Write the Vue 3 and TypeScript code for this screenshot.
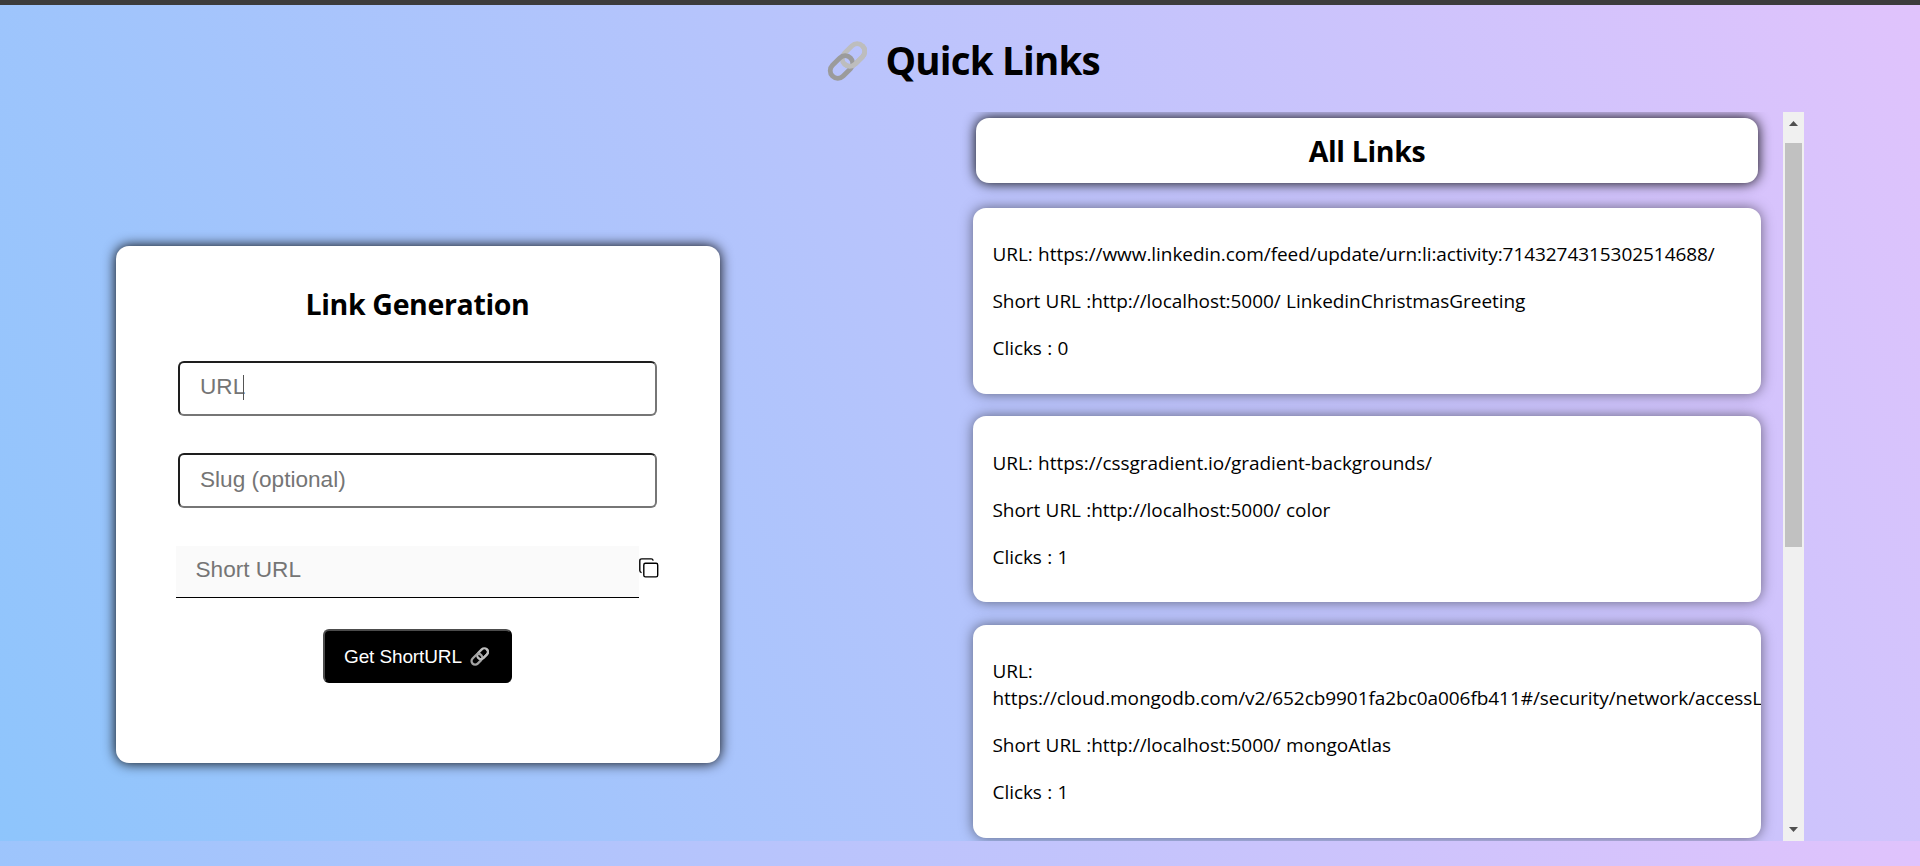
<script setup lang="ts">
import { ref } from 'vue'

interface LinkItem {
  url: string
  slug: string
  clicks: number
}

const url = ref('')
const slug = ref('')
const shortUrl = ref('')

const links: LinkItem[] = [
  { url: 'https://www.linkedin.com/feed/update/urn:li:activity:7143274315302514688/', slug: 'LinkedinChristmasGreeting', clicks: 0 },
  { url: 'https://cssgradient.io/gradient-backgrounds/', slug: 'color', clicks: 1 },
  { url: 'https://cloud.mongodb.com/v2/652cb9901fa2bc0a006fb411#/security/network/accessL', slug: 'mongoAtlas', clicks: 1 },
]
</script>

<template>
  <div class="page">
    <header class="heading">
      <svg class="chain" viewBox="0 0 40 40" fill="none" stroke-width="4.8">
        <clipPath id="lower-half"><path d="M0 40L40 0V40Z" /></clipPath>
        <rect x="13.7" y="6.4" width="25.6" height="15.2" rx="7.6" stroke="#bdbdbd" transform="rotate(-45 26.5 14)" />
        <rect x="1.7" y="18.4" width="25.6" height="15.2" rx="7.6" stroke="#9b9b9b" transform="rotate(-45 14.5 26)" />
        <g clip-path="url(#lower-half)">
          <rect x="13.7" y="6.4" width="25.6" height="15.2" rx="7.6" stroke="#bdbdbd" transform="rotate(-45 26.5 14)" />
        </g>
      </svg>
      <h1>Quick Links</h1>
    </header>

    <main class="columns">
      <section class="form-card">
        <h2>Link Generation</h2>
        <div class="field">
          <input v-model="url" type="text" placeholder="URL" />
          <span class="caret"></span>
        </div>
        <div class="field slug">
          <input v-model="slug" type="text" placeholder="Slug (optional)" />
        </div>
        <div class="short">
          <input v-model="shortUrl" type="text" placeholder="Short URL" readonly />
          <svg class="copy" viewBox="0 0 20 20" fill="none" stroke="#000" stroke-width="1.4">
            <path d="M2.6 14.6Q.8 14.2 .8 12.5V2.8Q.8.9 2.8.9H12.2Q13.8.9 14.2 2.6" />
            <rect x="4.8" y="5.3" width="13.9" height="13.6" rx="1.6" />
          </svg>
        </div>
        <button type="button">
          <span>Get ShortURL</span>
          <svg class="chain-small" viewBox="0 0 40 40" fill="none" stroke-width="4.8">
            <rect x="13.7" y="6.4" width="25.6" height="15.2" rx="7.6" stroke="#bdbdbd" transform="rotate(-45 26.5 14)" />
            <rect x="1.7" y="18.4" width="25.6" height="15.2" rx="7.6" stroke="#a3a3a3" transform="rotate(-45 14.5 26)" />
            <g clip-path="url(#lower-half)">
              <rect x="13.7" y="6.4" width="25.6" height="15.2" rx="7.6" stroke="#bdbdbd" transform="rotate(-45 26.5 14)" />
            </g>
          </svg>
        </button>
      </section>

      <section class="list">
        <div class="items">
          <div class="list-title"><h2>All Links</h2></div>
          <article v-for="link in links" :key="link.slug" class="item">
            <p>URL: {{ link.url }}</p>
            <p>Short URL :http://localhost:5000/ {{ link.slug }}</p>
            <p>Clicks : {{ link.clicks }}</p>
          </article>
        </div>
        <div class="scrollbar">
          <svg viewBox="0 0 21 31"><path d="M6 14L10.5 9L15 14Z" fill="#505050" /></svg>
          <div class="thumb"></div>
          <svg class="down" viewBox="0 0 21 31"><path d="M6 17L10.5 22L15 17Z" fill="#505050" /></svg>
        </div>
      </section>
    </main>
  </div>
</template>

<style>
body {
  margin: 0;
  overflow: hidden;
}
</style>

<style scoped>
* {
  box-sizing: border-box;
}
.page {
  height: 866px;
  border-top: 5px solid #3c3c3c;
  overflow: hidden;
  background: linear-gradient(62deg, #8ec5fc 0%, #e0c3fc 100%) 0 0 / 100% 836px repeat-y;
  font-family: 'Open Sans', 'Noto Sans', sans-serif;
  color: #000;
}
.heading {
  display: flex;
  height: 107px;
  padding: 36px 0 0 827px;
}
.chain {
  width: 40px;
  height: 40px;
  margin-right: 18.5px;
}
h1, h2, p {
  margin: 0;
}
h1 {
  font-size: 38.5px;
  line-height: 54px;
  margin-top: -8px;
  letter-spacing: -0.8px;
  white-space: nowrap;
}
h2 {
  font-size: 28.5px;
  line-height: 40px;
  letter-spacing: -0.35px;
  white-space: nowrap;
}
.columns {
  display: flex;
  align-items: flex-start;
  height: 729px;
}
.form-card {
  display: flex;
  flex-direction: column;
  align-items: center;
  width: 604px;
  height: 517px;
  margin: 134px 0 0 116px;
  padding: 38px 1px 0 0;
  border-radius: 13px;
  background: #fff;
  box-shadow: 0 0 13px #000;
}
.form-card h2 {
  margin-bottom: 37px;
}
.field {
  position: relative;
  width: 479px;
  height: 55px;
  margin-bottom: 37px;
}
input {
  display: block;
  font-family: 'Liberation Sans', Arial, sans-serif;
  font-size: 22.6px;
  outline: none;
}
input::placeholder {
  color: #757575;
  opacity: 1;
}
.field input {
  width: 100%;
  height: 100%;
  padding: 0 20px 3px;
  border: 2px solid;
  border-color: #1e1e1e #767676 #767676 #1e1e1e;
  border-radius: 6px;
  background: #fff;
}
.field.slug input {
  padding-bottom: 1px;
}
.caret {
  position: absolute;
  left: 65px;
  top: 14px;
  width: 1px;
  height: 25px;
  background: #555;
}
.short {
  display: flex;
  width: 483px;
  height: 52px;
  margin: 1px 0 31px;
}
.short input {
  width: 463px;
  height: 52px;
  flex: none;
  padding: 0 19.5px 4px;
  border: 0;
  border-bottom: 1px solid #000;
  background: #fafafa;
}
.copy {
  width: 20px;
  height: 20px;
  flex: none;
  margin: 12px 0 0;
}
button {
  display: flex;
  align-items: center;
  width: 189px;
  height: 54px;
  padding: 1px 0 0 19px;
  border: 2px solid;
  border-color: #4c4c4c #000 #000 #4c4c4c;
  border-radius: 6px;
  background: #000;
  color: #fff;
  font-family: 'Liberation Sans', Arial, sans-serif;
  font-size: 19px;
  letter-spacing: -0.12px;
  white-space: nowrap;
}
.chain-small {
  width: 19px;
  height: 19px;
  margin-left: 8px;
}
.list {
  display: flex;
  width: 871px;
  height: 729px;
  margin-left: 213px;
  overflow: hidden;
}
.items {
  width: 850px;
  height: 729px;
  padding: 6px 22px 0 40px;
  overflow: hidden;
}
.list-title {
  height: 65px;
  margin: 0 3px 25px;
  padding: 13px 0 0;
  border-radius: 13px;
  background: #fff;
  box-shadow: 0 0 13px #000;
  text-align: center;
}
.item {
  width: 788px;
  margin-bottom: 22.3px;
  padding: 13.3px 20px 11.7px 19.5px;
  border-radius: 13px;
  background: #fff;
  box-shadow: 0 0 13px rgba(0, 0, 0, 0.5);
  overflow: hidden;
}
.item p {
  margin: 20px 0;
  font-size: 19px;
  line-height: 27px;
  letter-spacing: -0.06px;
  word-spacing: 0.5px;
}
.item p + p {
  margin-top: 0;
}
.scrollbar {
  display: flex;
  flex-direction: column;
  width: 21px;
  height: 729px;
  background: #f0f0f0;
}
.scrollbar svg {
  width: 21px;
  height: 31px;
  flex: none;
}
.thumb {
  width: 17px;
  height: 404px;
  margin-left: 2px;
  background: #c1c1c1;
}
.scrollbar .down {
  margin-top: auto;
}
</style>
